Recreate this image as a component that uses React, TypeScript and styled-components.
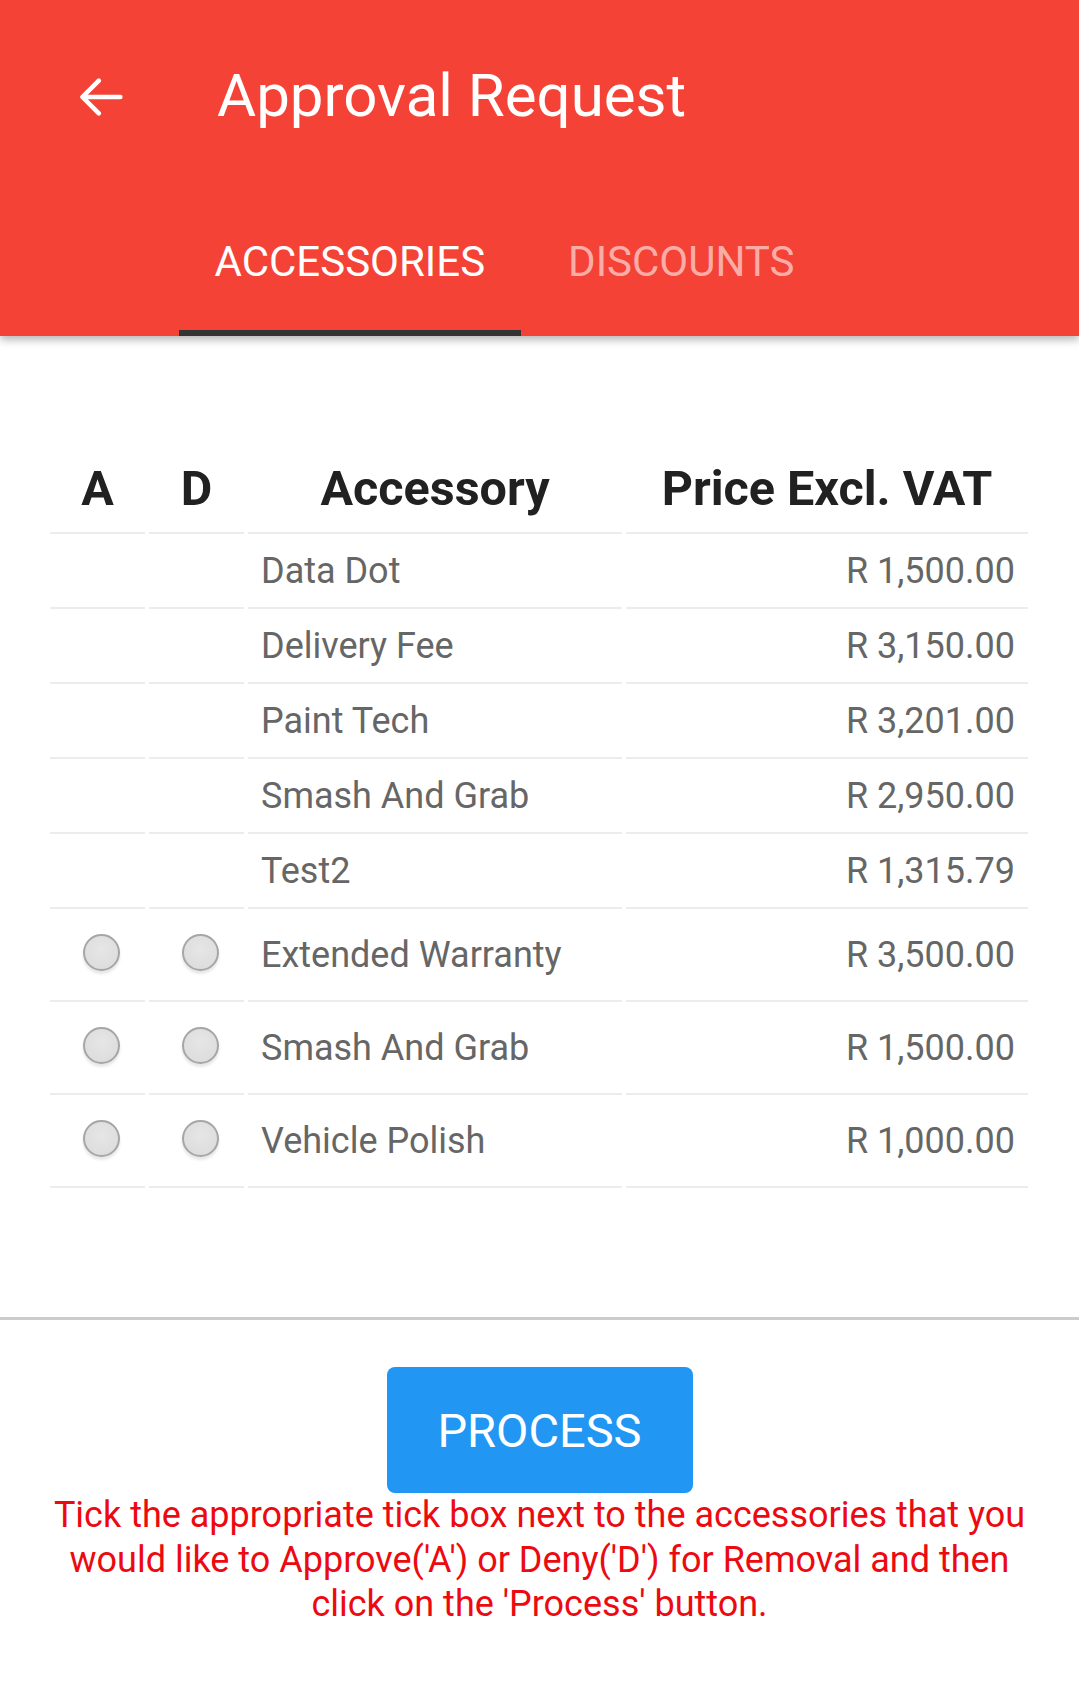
import React from "react";
import styled, { createGlobalStyle } from "styled-components";

const GlobalStyle = createGlobalStyle`
  html, body {
    margin: 0;
    padding: 0;
    background: #ffffff;
    font-family: Roboto, "Noto Sans", Arial, sans-serif;
  }
  * { box-sizing: border-box; }
`;

const Page = styled.div`
  width: 1079px;
  min-height: 1701px;
  background: #fff;
  display: flex;
  flex-direction: column;
`;

const AppBar = styled.header`
  background: #f44336;
  box-shadow: 0 4px 8px rgba(0, 0, 0, 0.28);
  position: relative;
  z-index: 1;
`;

const Toolbar = styled.div`
  height: 196px;
  display: flex;
  align-items: center;
  padding-left: 72px;
  gap: 86px;
`;

const BackButton = styled.button`
  width: 58px;
  height: 58px;
  border: none;
  background: transparent;
  padding: 0;
  display: flex;
  align-items: center;
  justify-content: center;
  color: #fff;
  margin-top: -2px;
`;

const Title = styled.h1`
  margin: -4px 0 0 1px;
  font-family: Roboto, sans-serif;
  font-weight: 400;
  font-size: 60px;
  line-height: 1;
  color: #fff;
  letter-spacing: 0;
`;

const Tabs = styled.nav`
  height: 140px;
  display: flex;
  align-items: stretch;
  padding-left: 179px;
  gap: 12px;
`;

const Tab = styled.div<{ $active?: boolean }>`
  display: flex;
  align-items: center;
  justify-content: center;
  padding: 0 35.5px 4px;
  font-family: Roboto, sans-serif;
  font-size: 42px;
  font-weight: 400;
  color: ${(p) => (p.$active ? "#ffffff" : "rgba(255,255,255,0.58)")};
  border-bottom: 6px solid ${(p) => (p.$active ? "#333333" : "transparent")};
`;

const TableWrap = styled.section`
  padding: 110px 51px 0 50px;
`;

const Row = styled.div<{ $h: number }>`
  display: grid;
  grid-template-columns: 95px 95px 374px 402px;
  column-gap: 4px;
  height: ${(p) => p.$h}px;
`;

const Cell = styled.div<{ $align?: "left" | "center" | "right" }>`
  border-bottom: 2px solid #ececec;
  display: flex;
  align-items: center;
  justify-content: ${(p) =>
    p.$align === "right" ? "flex-end" : p.$align === "center" ? "center" : "flex-start"};
  padding: 0 13px;
  font-family: Roboto, sans-serif;
  font-size: 36px;
  color: #666666;
  white-space: nowrap;
`;

const HeadCell = styled(Cell)`
  font-size: 48.5px;
  font-weight: 700;
  color: #212121;
  padding-bottom: 2px;
`;

const Radio = styled.span`
  width: 37px;
  height: 37px;
  border-radius: 50%;
  border: 2.5px solid #a6a6a6;
  background: radial-gradient(circle at 50% 40%, #e6e6e6 0%, #dadada 100%);
  box-shadow: 0 3px 3px rgba(0, 0, 0, 0.1);
  margin: -4px 0 0 7px;
`;

const Divider = styled.hr`
  margin: 129px 0 0;
  border: none;
  height: 3px;
  background: #cccccc;
`;

const Footer = styled.div`
  display: flex;
  flex-direction: column;
  align-items: center;
  padding: 47px 40px 0;
`;

const ProcessButton = styled.button`
  width: 306px;
  height: 126px;
  border: none;
  border-radius: 8px;
  background: #2196f3;
  color: #fff;
  font-family: Roboto, sans-serif;
  font-size: 47px;
  font-weight: 400;
  padding: 0;
`;

const Hint = styled.p`
  margin: 0;
  text-align: center;
  color: #ec0a10;
  font-family: Roboto, sans-serif;
  font-size: 36px;
  line-height: 44.5px;
`;

const BackIcon = () => (
  <svg width="60" height="60" viewBox="0 0 24 24" fill="none">
    <path
      d="M20 12H4.4M11.1 5.2L4.3 12l6.8 6.8"
      stroke="#fff"
      strokeWidth="1.9"
      strokeLinecap="round"
      strokeLinejoin="round"
    />
  </svg>
);

type Item = { name: string; price: string; choice: boolean };

const items: Item[] = [
  { name: "Data Dot", price: "R 1,500.00", choice: false },
  { name: "Delivery Fee", price: "R 3,150.00", choice: false },
  { name: "Paint Tech", price: "R 3,201.00", choice: false },
  { name: "Smash And Grab", price: "R 2,950.00", choice: false },
  { name: "Test2", price: "R 1,315.79", choice: false },
  { name: "Extended Warranty", price: "R 3,500.00", choice: true },
  { name: "Smash And Grab", price: "R 1,500.00", choice: true },
  { name: "Vehicle Polish", price: "R 1,000.00", choice: true },
];

export default function App() {
  return (
    <Page>
      <GlobalStyle />
      <AppBar>
        <Toolbar>
          <BackButton aria-label="Back">
            <BackIcon />
          </BackButton>
          <Title>Approval Request</Title>
        </Toolbar>
        <Tabs>
          <Tab $active>ACCESSORIES</Tab>
          <Tab>DISCOUNTS</Tab>
        </Tabs>
      </AppBar>

      <TableWrap>
        <Row $h={88}>
          <HeadCell $align="center">A</HeadCell>
          <HeadCell $align="center">D</HeadCell>
          <HeadCell $align="center">Accessory</HeadCell>
          <HeadCell $align="center">Price Excl. VAT</HeadCell>
        </Row>
        {items.map((it, i) => (
          <Row key={i} $h={it.choice ? 93 : 75}>
            <Cell $align="center">{it.choice && <Radio />}</Cell>
            <Cell $align="center">{it.choice && <Radio />}</Cell>
            <Cell>{it.name}</Cell>
            <Cell $align="right">{it.price}</Cell>
          </Row>
        ))}
      </TableWrap>

      <Divider />

      <Footer>
        <ProcessButton>PROCESS</ProcessButton>
        <Hint>
          Tick the appropriate tick box next to the accessories that you would like to
          Approve('A') or Deny('D') for Removal and then click on the 'Process' button.
        </Hint>
      </Footer>
    </Page>
  );
}
